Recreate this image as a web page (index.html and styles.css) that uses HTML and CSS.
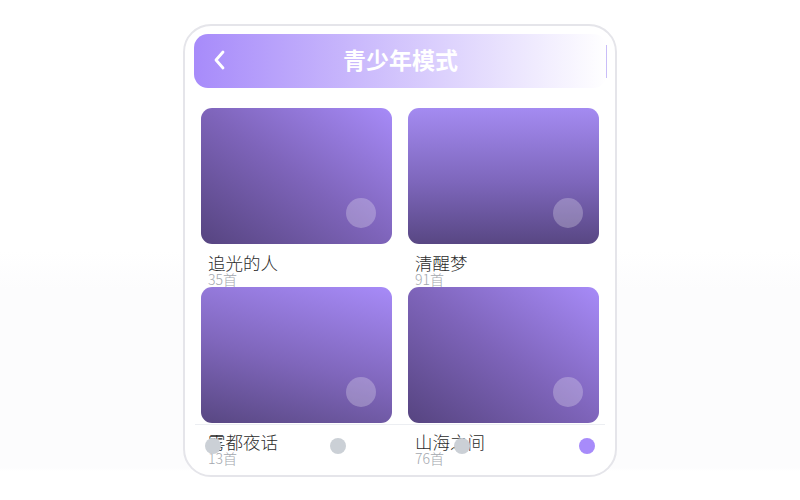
FILE: index.html
```html
<!DOCTYPE html>
<html lang="zh">
<head>
<meta charset="utf-8">
<title>青少年模式</title>
<link rel="stylesheet" href="styles.css">
</head>
<body>
<div class="phone">
  <header class="header">
    <span class="back">
      <svg width="14" height="20" viewBox="0 0 14 20"><polyline points="11,2 4,10 11,18" fill="none" stroke="#fff" stroke-width="2.8" stroke-linecap="round" stroke-linejoin="round"/></svg>
    </span>
    <h1 class="title">青少年模式</h1>
    <span class="spacer"></span>
  </header>
  <div class="grid">
    <div class="album">
      <div class="cover cover-diag"><span class="play"></span></div>
      <div class="name">追光的人</div>
      <div class="count">35首</div>
    </div>
    <div class="album">
      <div class="cover cover-vert"><span class="play"></span></div>
      <div class="name">清醒梦</div>
      <div class="count">91首</div>
    </div>
    <div class="album">
      <div class="cover cover-tilt"><span class="play"></span></div>
      <div class="name">雾都夜话</div>
      <div class="count">13首</div>
    </div>
    <div class="album">
      <div class="cover cover-diag"><span class="play"></span></div>
      <div class="name">山海之间</div>
      <div class="count">76首</div>
    </div>
  </div>
  <nav class="tabbar">
    <span class="dot"></span>
    <span class="dot"></span>
    <span class="dot"></span>
    <span class="dot dot-active"></span>
  </nav>
</div>
</body>
</html>
```
FILE: styles.css
```css
html, body {
  margin: 0;
  padding: 0;
}
body {
  height: 500px;
  padding-top: 24px;
  box-sizing: border-box;
  background: linear-gradient(180deg, #ffffff 0, #ffffff 250px, #fcfcfd 290px, #fcfcfd 468px, #ffffff 471px);
  font-family: "Noto Sans CJK SC", "Noto Sans", sans-serif;
}
.phone {
  position: relative;
  width: 434px;
  height: 453px;
  margin: 0 auto;
  box-sizing: border-box;
  border: 2px solid #e5e5ea;
  border-radius: 28px;
  background: #fff;
  overflow: hidden;
  padding: 8px 8px 0 9px;
}
.header {
  position: relative;
  height: 54px;
  border-radius: 14px;
  background: linear-gradient(90deg, #a78bfa 0%, #ffffff 100%);
  display: grid;
  grid-template-columns: 50px 1fr 50px;
  align-items: center;
}
.header::after {
  content: "";
  position: absolute;
  right: 0;
  top: 11px;
  bottom: 10px;
  width: 1px;
  background: #c9bdf8;
}
.back {
  display: flex;
  padding-left: 18px;
  margin-top: -2px;
}
.title {
  margin: -4px 0 0;
  text-align: center;
  color: #fff;
  font-size: 23px;
  font-weight: 700;
  line-height: 1;
}
.grid {
  margin-top: 20px;
  padding: 0 8px 0 7px;
  display: grid;
  grid-template-columns: 191px 191px;
  column-gap: 16px;
}
.album {
  height: 179px;
  overflow: hidden;
}
.cover {
  position: relative;
  height: 136px;
  border-radius: 11px;
}
.cover-diag {
  background: linear-gradient(to bottom left, #a78bf8 0%, #7e64ba 50%, #564480 100%);
}
.cover-vert {
  background: linear-gradient(180deg, #a48bf1 0%, #7d66bb 55%, #584783 100%);
}
.cover-tilt {
  background: linear-gradient(195deg, #a78bf8 0%, #7f66bb 55%, #584782 100%);
}
.play {
  position: absolute;
  right: 16px;
  bottom: 16px;
  width: 30px;
  height: 30px;
  border-radius: 50%;
  background: rgba(255, 255, 255, 0.25);
}
.name {
  margin-top: 10px;
  padding-left: 7px;
  font-size: 17.5px;
  font-weight: 300;
  line-height: 18px;
  color: #2b2b2b;
}
.count {
  padding-left: 7px;
  font-size: 14px;
  font-weight: 300;
  line-height: 15px;
  color: #a3a7ae;
}
.tabbar {
  position: absolute;
  left: 10px;
  right: 10px;
  bottom: 0;
  height: 51px;
  box-sizing: border-box;
  border-top: 1px solid #eceef2;
  padding: 13px 10px 0;
  display: flex;
  justify-content: space-between;
  align-items: flex-start;
}
.dot {
  width: 16px;
  height: 16px;
  border-radius: 50%;
  background: #cbd0d6;
}
.dot-active {
  background: #a78bfa;
}
```
